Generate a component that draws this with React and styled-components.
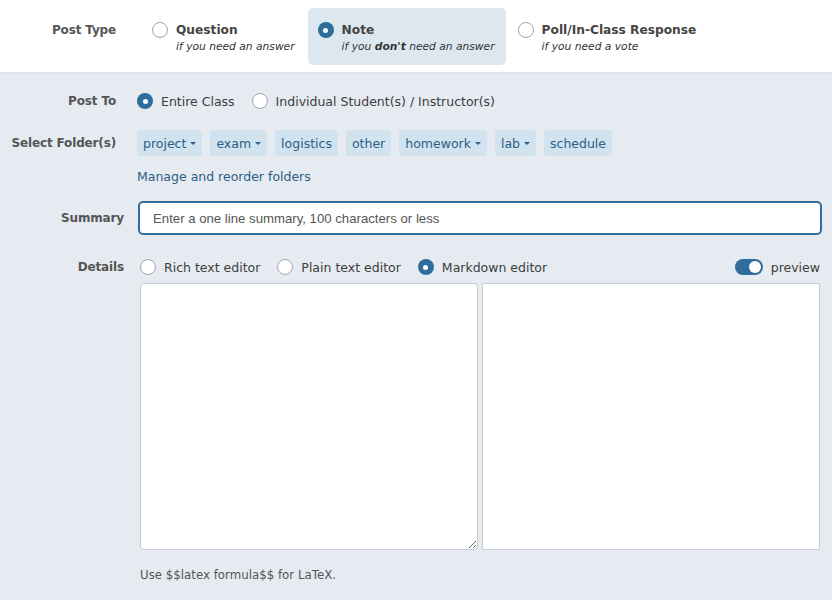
import React from "react";
import styled, { createGlobalStyle } from "styled-components";

const folders = [
  { name: "project", menu: true },
  { name: "exam", menu: true },
  { name: "logistics" },
  { name: "other" },
  { name: "homework", menu: true },
  { name: "lab", menu: true },
  { name: "schedule" },
];

const postTypes = [
  { title: "Question", hint: <>if you need an answer</> },
  { title: "Note", hint: <>if you <b>don't</b> need an answer</>, active: true },
  { title: "Poll/In-Class Response", hint: <>if you need a vote</> },
];

const App = () => (
  <>
    <GlobalStyle />
    <TopSection>
      <Label $width={116}>Post Type</Label>
      <TypeOptions>
        {postTypes.map((t) => (
          <TypeOption key={t.title} $active={t.active}>
            <Radio $checked={t.active} />
            <div>
              <TypeTitle>{t.title}</TypeTitle>
              <TypeHint>{t.hint}</TypeHint>
            </div>
          </TypeOption>
        ))}
      </TypeOptions>
    </TopSection>

    <Form>
      <Row $top={18}>
        <Label $width={116}>Post To</Label>
        <Choices $gap={17}>
          <Choice>
            <Radio $checked />
            Entire Class
          </Choice>
          <Choice>
            <Radio />
            Individual Student(s) / Instructor(s)
          </Choice>
        </Choices>
      </Row>

      <Row $top={19}>
        <Label $width={116}>Select Folder(s)</Label>
        <Chips>
          {folders.map((f) => (
            <Chip key={f.name}>
              {f.name}
              {f.menu && <Caret />}
            </Chip>
          ))}
        </Chips>
      </Row>

      <Row $top={13}>
        <Label $width={116} />
        <ManageLink href="#">Manage and reorder folders</ManageLink>
      </Row>

      <Row $top={16} $gap={14}>
        <Label $width={124}>Summary</Label>
        <SummaryInput placeholder="Enter a one line summary, 100 characters or less" />
      </Row>

      <Row $top={22} $gap={16}>
        <Label $width={124}>Details</Label>
        <DetailsBar>
          <Choices $gap={17}>
            <Choice>
              <Radio />
              Rich text editor
            </Choice>
            <Choice>
              <Radio />
              Plain text editor
            </Choice>
            <Choice>
              <Radio $checked />
              Markdown editor
            </Choice>
          </Choices>
          <Choice>
            <Toggle />
            preview
          </Choice>
        </DetailsBar>
      </Row>

      <Editors>
        <Editor />
        <Preview />
      </Editors>

      <Footnote>Use $$latex formula$$ for LaTeX.</Footnote>
    </Form>
  </>
);

export default App;

const GlobalStyle = createGlobalStyle`
  body {
    margin: 0;
    background: #e6ebf2;
    font-family: "DejaVu Sans", Verdana, sans-serif;
    font-size: 12.5px;
    color: #3d3d3d;
  }
`;

const TopSection = styled.section`
  display: flex;
  align-items: flex-start;
  gap: 26px;
  height: 73px;
  padding-top: 8px;
  box-sizing: border-box;
  background: #fff;
  border-bottom: 1px solid #dfe4eb;
`;

const Label = styled.div`
  flex: none;
  width: ${(p) => p.$width}px;
  text-align: right;
  font-weight: bold;
  font-size: 12px;
  letter-spacing: -0.15px;
  color: #555;
  white-space: nowrap;
  ${TopSection} & {
    padding-top: 15px;
  }
`;

const TypeOptions = styled.div`
  display: flex;
  gap: 2px;
`;

const TypeOption = styled.div`
  display: flex;
  gap: 8px;
  height: 57px;
  box-sizing: border-box;
  padding: 13px 11px 0 10px;
  border-radius: 5px;
  background: ${(p) => (p.$active ? "#dce7f0" : "transparent")};
`;

const TypeTitle = styled.div`
  font-weight: bold;
  font-size: 12.2px;
  line-height: 18px;
  color: #444;
`;

const TypeHint = styled.div`
  font-style: italic;
  font-size: 10.7px;
  line-height: 15px;
  color: #333;
`;

const Radio = styled.span`
  flex: none;
  box-sizing: border-box;
  width: 16px;
  height: 16px;
  border-radius: 50%;
  background: ${(p) => (p.$checked ? "#2e6d9c" : "#fff")};
  border: ${(p) => (p.$checked ? "none" : "1px solid #9ea4aa")};
  display: flex;
  align-items: center;
  justify-content: center;
  &::after {
    content: "";
    display: ${(p) => (p.$checked ? "block" : "none")};
    width: 5px;
    height: 5px;
    border-radius: 50%;
    background: #fff;
  }
  ${TypeOption} & {
    margin-top: 1px;
  }
`;

const Form = styled.main`
  padding-right: 10px;
`;

const Row = styled.div`
  display: flex;
  align-items: center;
  gap: ${(p) => p.$gap ?? 21}px;
  margin-top: ${(p) => p.$top}px;
`;

const Choices = styled.div`
  display: flex;
  align-items: center;
  gap: ${(p) => p.$gap}px;
`;

const Choice = styled.label`
  display: flex;
  align-items: center;
  gap: 8px;
  height: 20px;
  color: #3d3d3d;
`;

const Chips = styled.div`
  display: flex;
  gap: 8px;
`;

const Chip = styled.span`
  display: flex;
  align-items: center;
  gap: 4px;
  height: 26px;
  padding: 0 6px;
  border-radius: 3px;
  background: #d1e3ee;
  color: #2b5e86;
`;

const Caret = styled.span`
  width: 0;
  height: 0;
  border-left: 3px solid transparent;
  border-right: 3px solid transparent;
  border-top: 3px solid #2b5e86;
`;

const ManageLink = styled.a`
  color: #2b5e86;
  text-decoration: none;
  line-height: 16px;
`;

const SummaryInput = styled.input`
  flex: 1;
  height: 34px;
  box-sizing: border-box;
  padding: 0 13px;
  border: 2.5px solid #2e6d9c;
  border-radius: 5px;
  background: #fff;
  font-family: "Liberation Sans", Arial, sans-serif;
  font-size: 13.2px;
  outline: none;
  &::placeholder {
    color: #555;
  }
`;

const DetailsBar = styled.div`
  flex: 1;
  display: flex;
  align-items: center;
  justify-content: space-between;
  padding-right: 2px;
`;

const Toggle = styled.span`
  position: relative;
  width: 28px;
  height: 16px;
  border-radius: 8px;
  background: #2e6d9c;
  &::after {
    content: "";
    position: absolute;
    right: 2px;
    top: 2px;
    width: 12px;
    height: 12px;
    border-radius: 50%;
    background: #fff;
  }
`;

const Editors = styled.div`
  display: grid;
  grid-template-columns: 1fr 1fr;
  gap: 4px;
  margin: 6px 2px 0 140px;
  height: 267px;
`;

const Editor = styled.textarea`
  box-sizing: border-box;
  margin: 0;
  border: 1px solid #c6cbd1;
  border-radius: 4px;
  background: #fff;
  resize: vertical;
  outline: none;
`;

const Preview = styled.div`
  border: 1px solid #c6cbd1;
  border-radius: 2px;
  background: #fff;
`;

const Footnote = styled.p`
  margin: 17px 0 0 140px;
  font-size: 11.8px;
  line-height: 16px;
  color: #555;
`;
